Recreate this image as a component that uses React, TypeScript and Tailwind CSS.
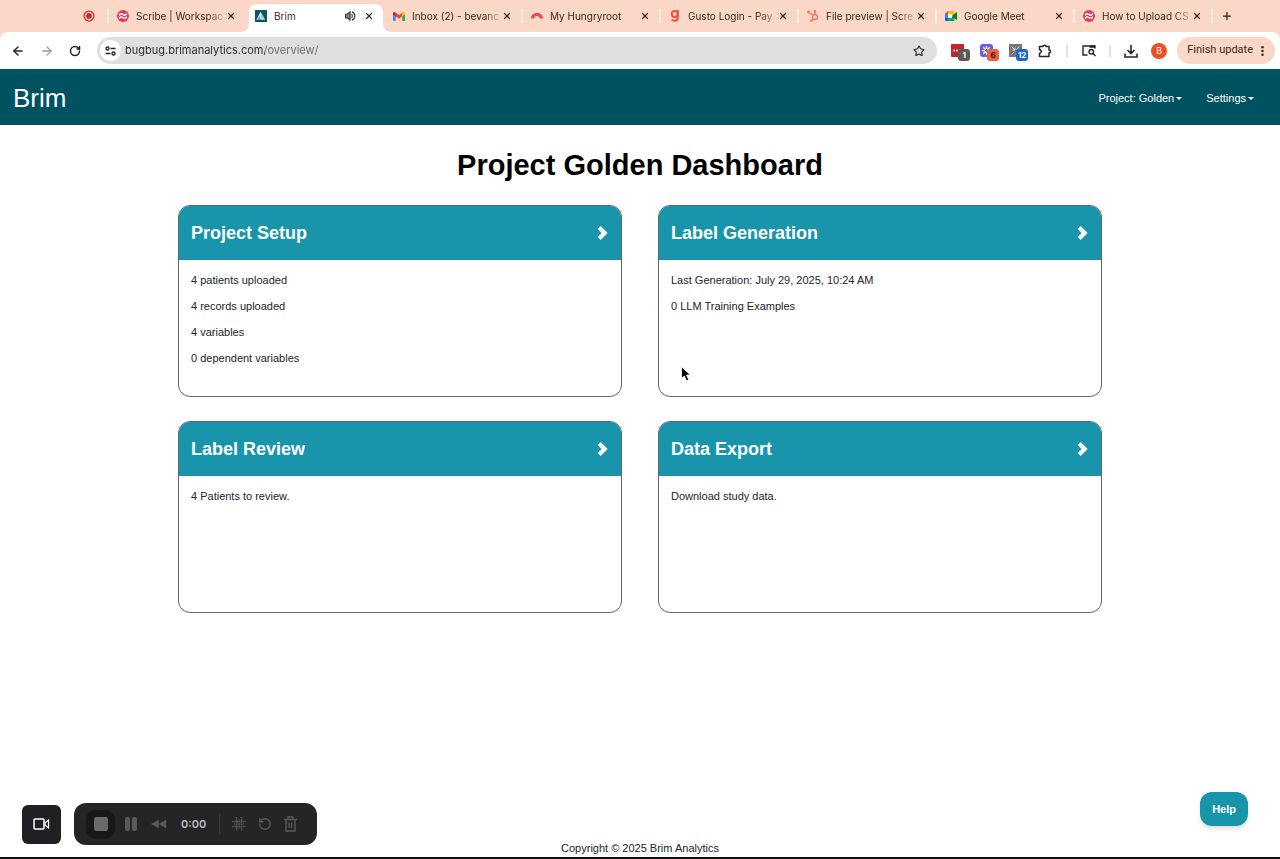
import type { ReactNode } from "react";
import {
  ArrowLeft,
  ArrowRight,
  Plus,
  RotateCcw,
  RotateCw,
  Star,
  X,
} from "lucide-react";

type Tab = {
  title: string;
  icon: ReactNode;
  active?: boolean;
};

type DashboardCard = {
  title: string;
  lines: string[];
};

function ScribeIcon() {
  return (
    <svg viewBox="0 0 24 24" className="size-3 shrink-0">
      <circle cx="12" cy="12" r="12" fill="#ea3a5b" />
      <path
        d="M5 9.500c2-3 4.500-2.500 7-.5s5 1.500 7-1M5 16c2-3 4.500-2.500 7-.5s5 1.500 7-1"
        fill="none"
        stroke="#fff"
        strokeWidth="3"
        strokeLinecap="round"
      />
    </svg>
  );
}

function BrimIcon() {
  return (
    <svg viewBox="0 0 26 26" className="size-3 shrink-0">
      <rect width="26" height="26" fill="#0b5560" />
      <path d="M12 4 22 21H3z" fill="#d6e6e8" />
      <path d="m9 13 4 8H6zM14 11l5 9-5-5z" fill="#5d929b" />
    </svg>
  );
}

function GmailIcon() {
  return (
    <svg viewBox="0 0 24 18" className="w-3 shrink-0">
      <path d="M0 3v13.500C0 17.500.7 18 1.600 18H5.500V8z" fill="#4285f4" />
      <path d="M24 3v13.500c0 1-.7 1.500-1.600 1.500h-3.900V8z" fill="#34a853" />
      <path d="M5.500 1.500V8.700l6.500 5 6.500-5V1.500L12 6.500z" fill="#ea4335" />
      <path d="M0 3v2l5.500 4V1.500L4 .5C2-.6 0 .6 0 3z" fill="#c5221f" />
      <path d="M24 3v2l-5.500 4V1.500L20 .5c2-1.100 4 .1 4 2.500z" fill="#fbbc04" />
    </svg>
  );
}

function HungryrootIcon() {
  return (
    <svg viewBox="0 0 26 16" className="w-3 shrink-0" fill="none" stroke="#ec4b57">
      <path d="M3.500 14a9.500 9 0 0 1 19 0" strokeWidth="7" />
    </svg>
  );
}

function GustoIcon() {
  return (
    <svg viewBox="0 0 18 24" className="h-3 w-3 shrink-0" fill="none" stroke="#f0523d" strokeWidth="4">
      <circle cx="8.500" cy="8" r="6" />
      <path d="M14.500 0v16c0 7-9 7-12 3" />
    </svg>
  );
}

function HubspotIcon() {
  return (
    <svg viewBox="0 0 24 24" className="size-3 shrink-0" fill="none" stroke="#f47c62" strokeWidth="2.800">
      <circle cx="16" cy="14" r="5" />
      <path d="M16 9V3M12.500 11 3 4M12.500 18 9 21.500" />
      <circle cx="16" cy="2.500" r="1.500" />
      <circle cx="3" cy="4" r="1.500" />
      <circle cx="8.500" cy="21.500" r="1" />
    </svg>
  );
}

function MeetIcon() {
  return (
    <svg viewBox="0 0 24 20" className="w-3 shrink-0">
      <path d="M6 0v6H0z" fill="#ea4335" />
      <path d="M0 6h6v8H0z" fill="#2684fc" />
      <path d="M0 14h6v6H2a2 2 0 0 1-2-2z" fill="#0066da" />
      <path d="M6 0h11a2 2 0 0 1 2 2v5l-5 3V6H6z" fill="#ffba00" />
      <path d="M6 6h8v8H6z" fill="#fff" />
      <path d="M6 20h11a2 2 0 0 0 2-2v-5l-5-3v4H6z" fill="#00ac47" />
      <path d="M14 10 22.500 2.500c.6-.5 1.500-.1 1.500.7v13.600c0 .8-.9 1.200-1.500.7z" fill="#00832d" />
    </svg>
  );
}

function SpeakerIcon() {
  return (
    <svg viewBox="0 0 24 22" className="mr-2 w-[11px] shrink-0" fill="none" stroke="#333" strokeWidth="2.500">
      <path d="M1 7h4l6-5v18l-6-5H1z" fill="#888" />
      <path d="M14 7a5 5 0 0 1 0 8M15 2a9.500 9.500 0 0 1 0 18" />
    </svg>
  );
}

const TABS: Tab[] = [
  { title: "Scribe | Workspac", icon: <ScribeIcon /> },
  { title: "Brim", icon: <BrimIcon />, active: true },
  { title: "Inbox (2) - bevanc", icon: <GmailIcon /> },
  { title: "My Hungryroot", icon: <HungryrootIcon /> },
  { title: "Gusto Login - Pay", icon: <GustoIcon /> },
  { title: "File preview | Scre", icon: <HubspotIcon /> },
  { title: "Google Meet", icon: <MeetIcon /> },
  { title: "How to Upload CS", icon: <ScribeIcon /> },
];

const CARDS: DashboardCard[] = [
  {
    title: "Project Setup",
    lines: ["4 patients uploaded", "4 records uploaded", "4 variables", "0 dependent variables"],
  },
  {
    title: "Label Generation",
    lines: ["Last Generation: July 29, 2025, 10:24 AM", "0 LLM Training Examples"],
  },
  { title: "Label Review", lines: ["4 Patients to review."] },
  { title: "Data Export", lines: ["Download study data."] },
];

function BrowserTab({ tab }: { tab: Tab }) {
  if (tab.active) {
    return (
      <div className="relative mx-0.5 mt-1 flex min-w-0 max-w-[134px] flex-1 items-center rounded-t-lg bg-white pr-[9px] pb-1 pl-1.5">
        <svg viewBox="0 0 8 8" className="absolute bottom-0 -left-2 size-2" fill="#fff">
          <path d="M8 0v8H0a8 8 0 0 0 8-8z" />
        </svg>
        {tab.icon}
        <span className="ml-[7px] flex-1">{tab.title}</span>
        <SpeakerIcon />
        <button aria-label={`Close ${tab.title}`}>
          <X className="size-2.5" strokeWidth={3} />
        </button>
        <svg viewBox="0 0 8 8" className="absolute -right-2 bottom-0 size-2" fill="#fff">
          <path d="M0 0v8h8a8 8 0 0 1-8-8z" />
        </svg>
      </div>
    );
  }

  return (
    <div className="flex min-w-0 max-w-[138px] flex-1 items-center pr-[11px] pl-2">
      {tab.icon}
      <span className="ml-[7px] flex min-w-0 flex-1">
        <span className="overflow-hidden whitespace-nowrap mask-r-from-[72px] mask-r-to-[92px]">{tab.title}</span>
      </span>
      <button aria-label={`Close ${tab.title}`}>
        <X className="size-2.5" strokeWidth={3} />
      </button>
    </div>
  );
}

function TabStrip() {
  return (
    <div className="flex h-8 bg-[#fad7c6] text-[10px] text-[#3a2722]">
      <div className="flex w-[109px] shrink-0 items-center justify-end gap-3">
        <svg viewBox="0 0 24 24" className="size-3">
          <circle cx="12" cy="12" r="10" fill="none" stroke="#c8302c" strokeWidth="2.500" />
          <circle cx="12" cy="12" r="6" fill="#c8302c" />
        </svg>
        <span className="h-3.5 w-0.5 bg-[#fdeee6]" />
      </div>
      {TABS.map((tab, i) => (
        <div key={i} className="contents">
          <BrowserTab tab={tab} />
          {i >= 2 && <span className="-ml-0.5 h-3.5 w-0.5 shrink-0 self-center bg-[#fdeee6]" />}
        </div>
      ))}
      <button aria-label="New tab" className="ml-2 text-[#222]">
        <Plus className="size-3" strokeWidth={2.5} />
      </button>
    </div>
  );
}

function ExtensionBadge({ className, children }: { className: string; children: ReactNode }) {
  return (
    <span
      className={`absolute top-[5px] left-[7px] flex h-3 min-w-3 items-center justify-center rounded-[3px] px-px text-[8px] font-bold ${className}`}
    >
      {children}
    </span>
  );
}

function Toolbar() {
  return (
    <div className="bg-[#fad7c6]">
      <div className="flex h-[37px] items-center rounded-t-lg bg-white pr-[5px] pl-[11px] text-[#262626]">
        <div className="flex w-[86px] shrink-0 items-center gap-[15px]">
          <button aria-label="Back">
            <ArrowLeft className="size-3.5" strokeWidth={2.5} />
          </button>
          <button aria-label="Forward" className="text-[#9b9b9b]">
            <ArrowRight className="size-3.5" strokeWidth={2.2} />
          </button>
          <button aria-label="Reload">
            <RotateCw className="size-3" strokeWidth={3} />
          </button>
        </div>

        <div className="flex h-[27px] min-w-0 flex-1 items-center rounded-full bg-[#dfdfdf] pr-3 pl-[3px]">
          <button
            aria-label="View site information"
            className="flex size-[21px] shrink-0 items-center justify-center rounded-full bg-white"
          >
            <svg viewBox="0 0 22 20" className="w-[11px]" fill="none" stroke="currentColor" strokeWidth="2.800">
              <circle cx="5" cy="5" r="3" />
              <path d="M11 5h10M1 15h10" />
              <circle cx="17" cy="15" r="3" />
            </svg>
          </button>
          <input
            type="text"
            aria-label="Address"
            defaultValue="bugbug.brimanalytics.com/overview/"
            className="ml-1 min-w-0 flex-1 bg-linear-to-r from-[#262626] from-[140px] to-[#6a6a6a] to-[140px] bg-clip-text text-[11px] text-transparent outline-none"
          />
          <button aria-label="Bookmark this tab">
            <Star className="size-3" strokeWidth={2.2} />
          </button>
        </div>

        <div className="ml-3.5 flex shrink-0 items-center">
          <button aria-label="Password extension" className="relative mr-4">
            <svg viewBox="0 0 26 26" className="size-[13px]">
              <rect width="26" height="26" rx="2" fill="#c9222f" />
              <path d="M4 13h4M10 13h4M16 13h3" stroke="#fff" strokeWidth="3" />
            </svg>
            <ExtensionBadge className="bg-[#5a5a5a] text-white">1</ExtensionBadge>
          </button>
          <button aria-label="Loom extension" className="relative mr-4">
            <svg viewBox="0 0 26 26" className="size-[13px]">
              <rect width="26" height="26" rx="6" fill="#625cf0" />
              <path d="M13 4v18M4 13h18M6.500 6.500l13 13M19.500 6.500l-13 13" stroke="#fff" strokeWidth="2.500" />
              <circle cx="13" cy="13" r="3" fill="#625cf0" />
            </svg>
            <ExtensionBadge className="bg-[#f1603a] text-[#3a1408]">6</ExtensionBadge>
          </button>
          <button aria-label="Capture extension" className="relative mr-4">
            <svg viewBox="0 0 26 26" className="size-[13px]">
              <rect width="26" height="26" fill="#777" />
              <path d="m5 5 7 7M12 7v5H7M21 5l-6 6M5 21l5-5" fill="none" stroke="#ddd" strokeWidth="2" />
            </svg>
            <ExtensionBadge className="bg-[#1668d8] text-white">12</ExtensionBadge>
          </button>
          <button aria-label="Extensions">
            <svg viewBox="0 0 28 28" className="size-3.5" fill="none" stroke="currentColor" strokeWidth="3">
              <path
                d="M3 5h7a3 2.500 0 0 1 6 0h6v7a3 3 0 0 1 0 6v7H3v-6.500a3.500 3.500 0 0 0 0-7z"
                strokeLinejoin="round"
              />
            </svg>
          </button>
          <span className="mx-3.5 h-3 w-0.5 bg-[#e6e0de]" />
          <button aria-label="Search this page">
            <svg viewBox="0 0 28 26" className="w-3.5" fill="none" stroke="currentColor" strokeWidth="2.800">
              <path d="M11 22H2V4h24v5" />
              <path d="M15 5h11" strokeWidth="5" />
              <circle cx="18.500" cy="15.500" r="4.500" />
              <path d="m22 19 5 5" />
            </svg>
          </button>
          <span className="mx-[13px] h-3 w-0.5 bg-[#e6e0de]" />
          <button aria-label="Downloads">
            <svg viewBox="0 0 28 28" className="size-3.5" fill="none" stroke="currentColor" strokeWidth="3.200">
              <path d="M14 2v16M7 12l7 7 7-7M2 19v7h24v-7" />
            </svg>
          </button>
          <button
            aria-label="Profile"
            className="ml-[13px] flex size-4 items-center justify-center rounded-full bg-[#ef4f1f] text-[9px] text-white"
          >
            B
          </button>
          <button className="ml-2.5 flex h-[27px] items-center gap-2 rounded-full bg-[#fad7c6] pr-[11px] pl-2.5 font-['Roboto',sans-serif] text-[11px] text-[#3a2722]">
            Finish update
            <svg viewBox="0 0 4 14" className="h-3 w-[3px]" fill="currentColor">
              <circle cx="2" cy="2" r="1.700" />
              <circle cx="2" cy="7" r="1.700" />
              <circle cx="2" cy="12" r="1.700" />
            </svg>
          </button>
        </div>
      </div>
    </div>
  );
}

function NavMenu({ label }: { label: string }) {
  return (
    <button className="flex items-center gap-0.5">
      {label}
      <span className="border-x-3 border-t-3 border-x-transparent border-t-white" />
    </button>
  );
}

function Navbar() {
  return (
    <nav className="flex h-14 items-center justify-between bg-[#005261] pt-0.5 pr-[26px] pl-[13px] text-white">
      <a href="#" className="text-[26px]">
        Brim
      </a>
      <div className="flex gap-6 text-[11px]">
        <NavMenu label="Project: Golden" />
        <NavMenu label="Settings" />
      </div>
    </nav>
  );
}

function Card({ card, children }: { card: DashboardCard; children?: ReactNode }) {
  return (
    <section className="relative min-h-48 overflow-hidden rounded-xl border border-[#5f6569]">
      <a href="#" className="flex h-[54px] items-center justify-between bg-[#1895ab] px-3 text-white">
        <h2 className="text-lg font-bold">{card.title}</h2>
        <svg viewBox="0 0 11 14" className="h-4 w-3" fill="none" stroke="currentColor" strokeWidth="4">
          <path d="m2 2 5 5-5 5" />
        </svg>
      </a>
      <div className="space-y-2.5 px-3 pt-3 text-[11px] leading-4 text-[#212529]">
        {card.lines.map((line) => (
          <p key={line}>{line}</p>
        ))}
      </div>
      {children}
    </section>
  );
}

function Pointer() {
  return (
    <svg viewBox="0 0 18 28" className="absolute top-40 left-[22px] h-4 w-2.5">
      <path
        d="M1 1v21l5-4.500 4 9 4-2-4-8.500h7z"
        fill="#000"
        stroke="#fff"
        strokeWidth="1.500"
      />
    </svg>
  );
}

function RecorderBar() {
  return (
    <div className="absolute bottom-3.5 left-[22px] flex items-center gap-[13px] font-['Inter',sans-serif]">
      <button
        aria-label="Camera"
        className="flex size-[39px] items-center justify-center rounded-md bg-[#1f2023] text-white"
      >
        <svg viewBox="0 0 34 24" className="w-[17px]" fill="none" stroke="currentColor" strokeWidth="3">
          <rect x="2" y="2" width="20" height="20" rx="2" />
          <path d="m24 10 7-6v16l-7-6z" strokeWidth="2.500" />
        </svg>
      </button>
      <div className="flex h-[42px] w-[243px] items-center rounded-xl bg-[#252528] pl-3 text-[#59595c]">
        <button
          aria-label="Stop"
          className="flex size-[29px] items-center justify-center rounded-[10px] bg-[#18181a]"
        >
          <span className="size-3.5 rounded-[2px] bg-[#69696b]" />
        </button>
        <button aria-label="Pause" className="ml-2.5 flex gap-0.5">
          <span className="h-3.5 w-[5px] rounded-[2px] bg-current" />
          <span className="h-3.5 w-[5px] rounded-[2px] bg-current" />
        </button>
        <button aria-label="Rewind" className="ml-3.5">
          <svg viewBox="0 0 32 20" className="w-4" fill="currentColor">
            <path d="M15 2v16L1 10zM30 2v16l-14-8z" stroke="currentColor" strokeLinejoin="round" />
          </svg>
        </button>
        <span className="ml-3.5 w-[26px] text-[11px] font-semibold whitespace-nowrap text-[#bdbdbf]">0:00</span>
        <span className="mx-3 h-5 w-px bg-[#3d3d40]" />
        <button aria-label="Effects">
          <svg viewBox="0 0 28 28" className="size-3.5" fill="none" stroke="currentColor" strokeWidth="3" strokeDasharray="3 1.500">
            <path d="M9 0v28M19 0v28M0 9h28M0 19h28" />
            <path d="M14 4v20M4 14h20" strokeWidth="2" />
          </svg>
        </button>
        <button aria-label="Restart" className="ml-3">
          <RotateCcw className="size-3.5" strokeWidth={2.5} />
        </button>
        <button aria-label="Delete" className="ml-3">
          <svg viewBox="0 0 26 32" className="h-4 w-[13px]" fill="none" stroke="currentColor" strokeWidth="2.800">
            <path d="M0 7h26M8 7V2h10v5M4 7v23h18V7M10.500 13v11M15.500 13v11" />
          </svg>
        </button>
      </div>
    </div>
  );
}

export default function App() {
  return (
    <div className="relative flex min-h-screen flex-col bg-white font-['Liberation_Sans',Arial,sans-serif]">
      <header className="font-['Inter',sans-serif]">
        <TabStrip />
        <Toolbar />
      </header>
      <Navbar />

      <main className="mx-auto w-full max-w-[924px] pt-5 pb-6">
        <h1 className="text-center text-[29px] leading-10 font-bold text-black">Project Golden Dashboard</h1>
        <div className="mt-5 grid grid-cols-2 gap-x-9 gap-y-6">
          {CARDS.map((card) => (
            <Card key={card.title} card={card}>
              {card.title === "Label Generation" && <Pointer />}
            </Card>
          ))}
        </div>
      </main>

      <footer className="mt-auto border-b-2 border-[#111] pb-px text-center text-[11px] leading-4 text-[#212529]">
        Copyright © 2025 Brim Analytics
      </footer>

      <RecorderBar />
      <button className="absolute right-8 bottom-[33px] h-[34px] rounded-xl bg-[#1895ab] px-3 text-[11px] font-bold text-white shadow-md">
        Help
      </button>
    </div>
  );
}
